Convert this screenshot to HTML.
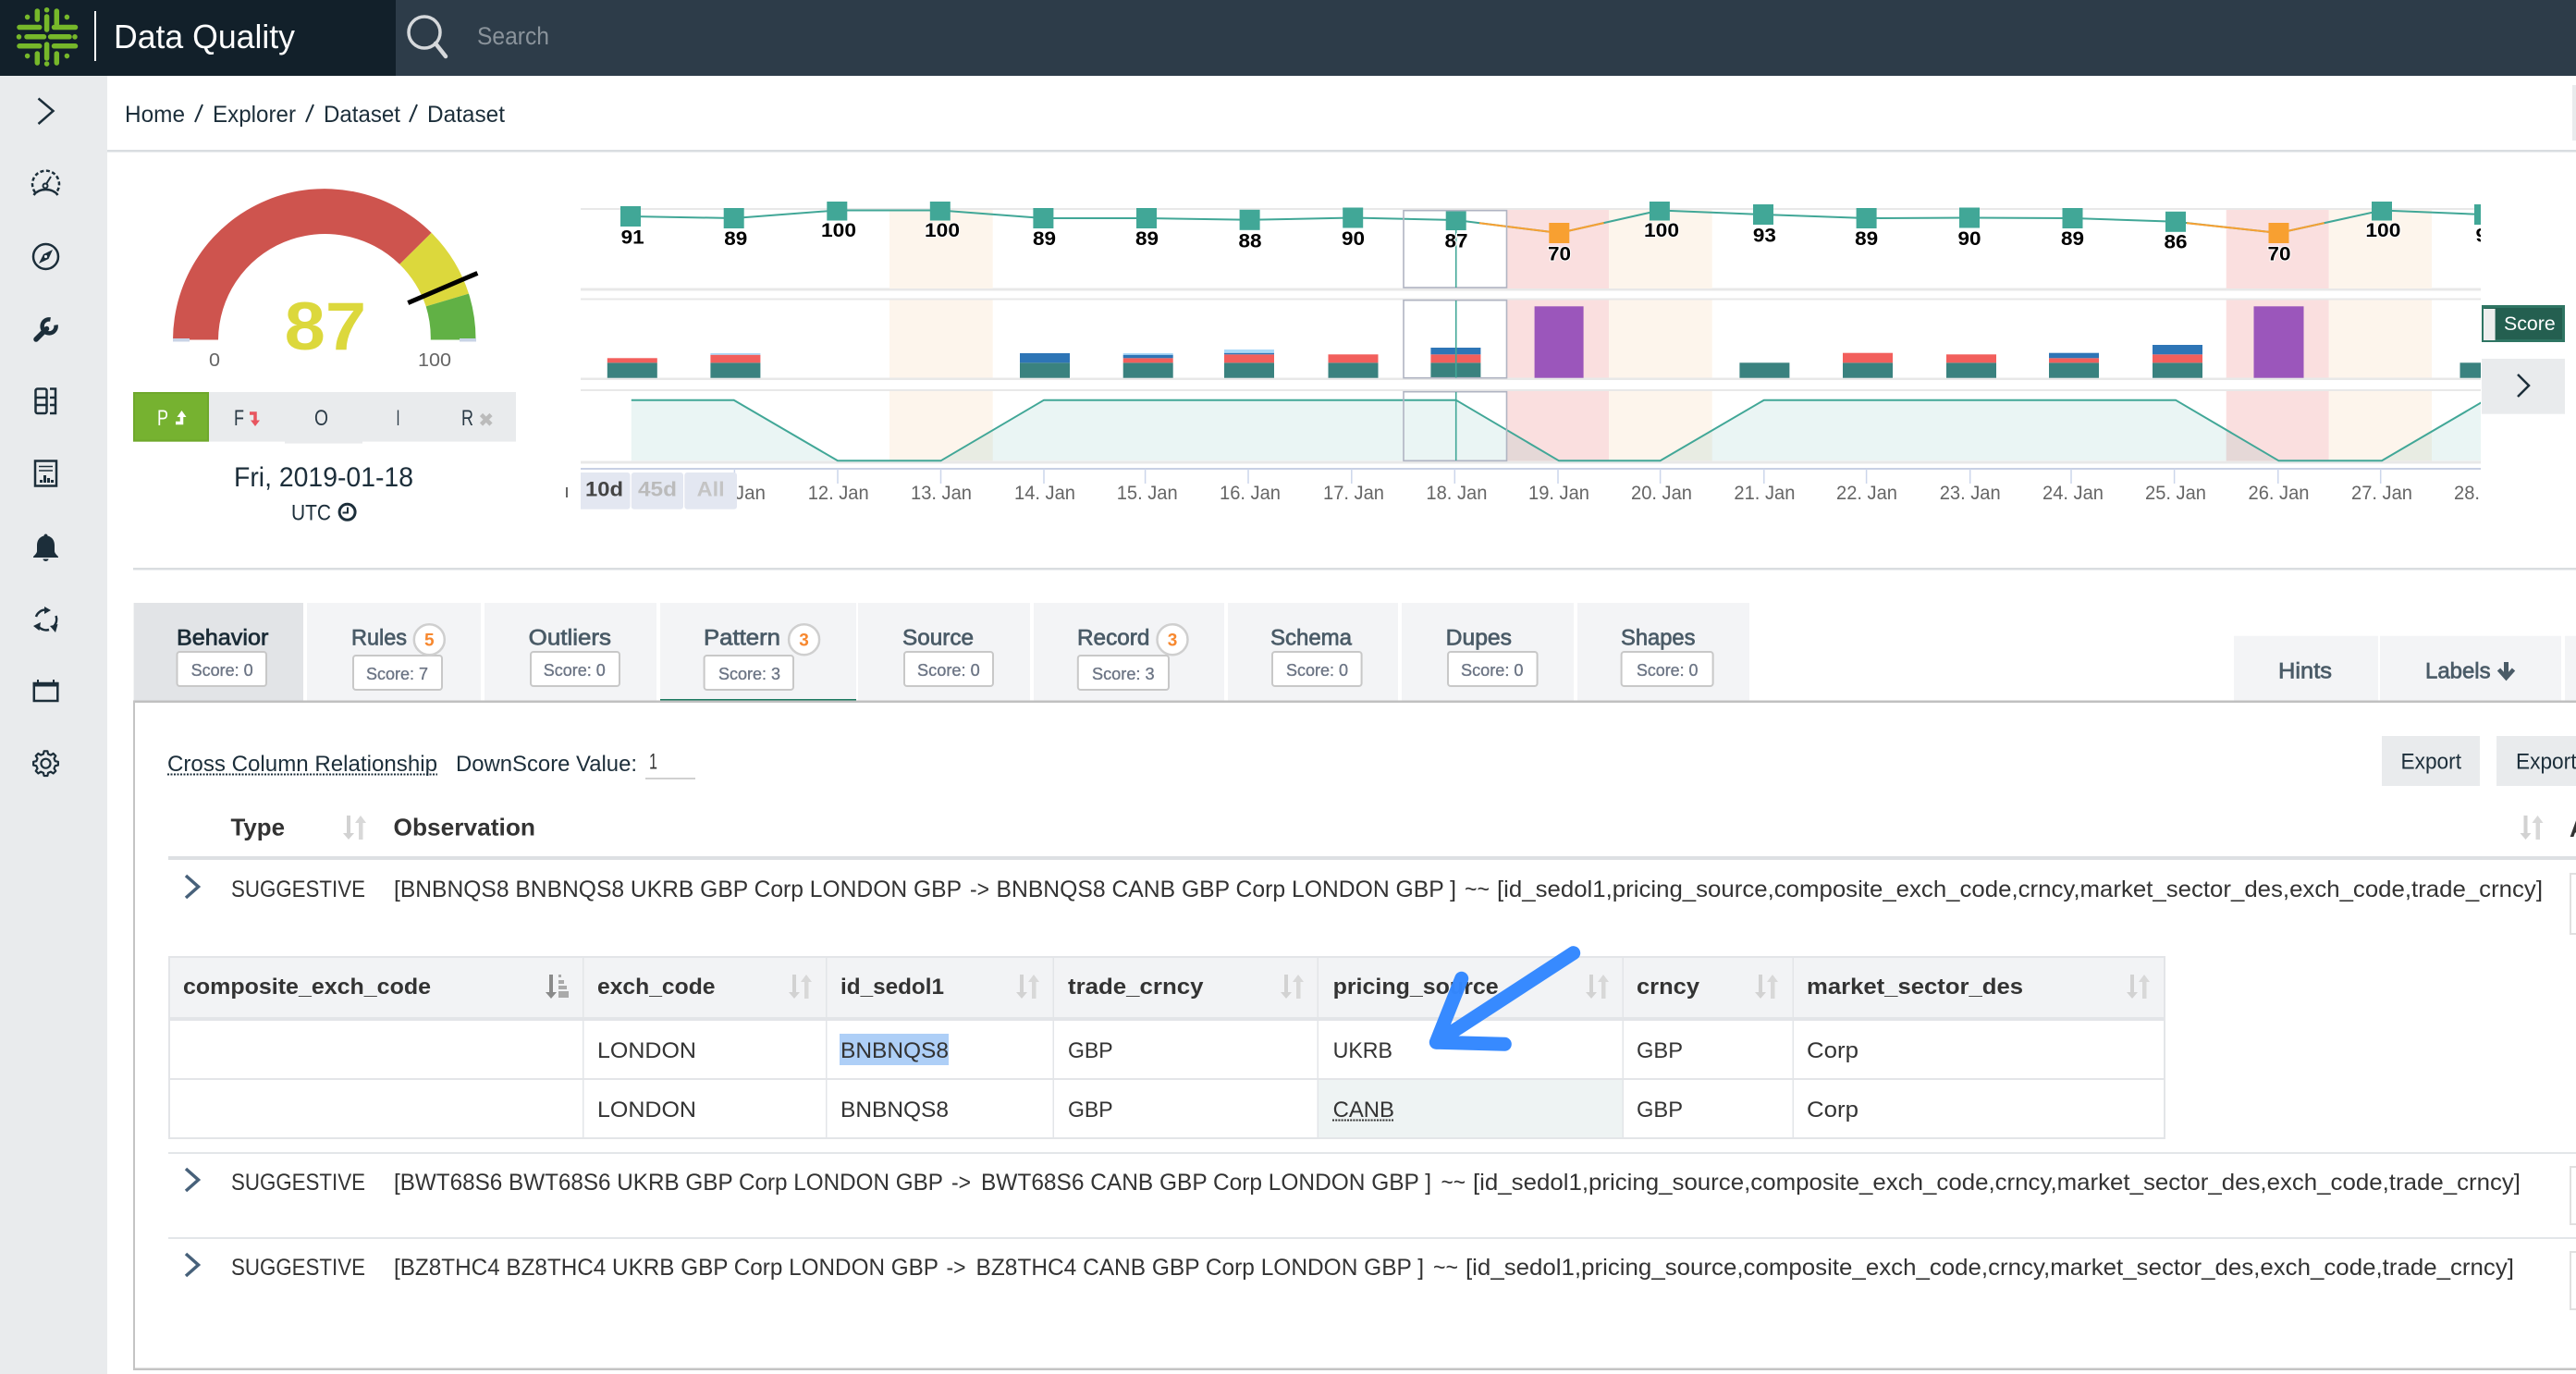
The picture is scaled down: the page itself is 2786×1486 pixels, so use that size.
<!DOCTYPE html>
<html lang="en">
<head>
<meta charset="utf-8">
<title>Data Quality</title>
<style>
html,body{margin:0;padding:0;background:#fff;width:2786px;height:1486px;overflow:hidden}
svg{display:block}
text{font-family:"Liberation Sans",sans-serif;white-space:pre}
.ml{font-size:21px;font-weight:700;fill:#000;stroke:#fff;stroke-width:2px;paint-order:stroke;text-anchor:middle}
.xl{font-size:21px;fill:#666;text-anchor:middle}
.tab{font-size:24px;fill:#4a5b67;stroke:#4a5b67;stroke-width:.7px}
.sc{font-size:18.5px;fill:#6c7585;stroke:#6c7585;stroke-width:.35px}
.bx{fill:#fff;stroke:#c8c8c8;stroke-width:2}
.bd{fill:#fff;stroke:#cfcfcf;stroke-width:2.5}
.bn{font-size:19px;font-weight:700;fill:#f7882f;text-anchor:middle}
.th{font-size:24px;font-weight:700;fill:#333}
.td{font-size:24px;fill:#333}
.rw{font-size:25px;fill:#333}
.ic{fill:none;stroke:#1c2e3a;stroke-width:2.5}
.lg{fill:none;stroke:#76b82a;stroke-width:5.5;stroke-linecap:round}
</style>
</head>
<body>
<svg width="2786" height="1486" viewBox="0 0 2786 1486" xmlns="http://www.w3.org/2000/svg">
<defs>
<symbol id="s" viewBox="0 0 25 26"><rect x="4" y="0" width="4" height="20" fill="#d2d2d2"/><polygon points="0,19 12,19 6,26" fill="#d2d2d2"/><rect x="17" y="7" width="4.5" height="19" fill="#d8d8d8"/><polygon points="13,8 25,8 19,0" fill="#d8d8d8"/></symbol>
<clipPath id="cp"><rect x="628" y="218" width="2055" height="340"/></clipPath>
</defs>

<!-- header -->
<rect x="0" y="0" width="2786" height="82" fill="#2d3c49"/>
<rect x="0" y="0" width="428" height="82" fill="#12202a"/>
<g class="lg">
<path d="M40.3,12V21M50.6,10.7V10.8M50.6,18V32M61.3,12V26M29.6,18.4V18.5M72.4,18.4V18.5"/>
<path d="M21,29.5H42.7M58.5,29.5H81.5M20.5,39.8V39.9M29,39.8H47.5M54.6,39.8H75M81,39.8V39.9M21,49.8H42.7M58.5,49.8H81.5"/>
<path d="M40.3,58V68M50.6,48V63M50.6,69V69.1M61.3,58V68M29.6,60.5V60.6M72.4,60.5V60.6"/>
</g>
<rect x="102" y="12" width="2" height="54" fill="#fff"/>
<text x="123" y="52" font-size="36" fill="#fff" textLength="196" lengthAdjust="spacingAndGlyphs">Data Quality</text>
<circle cx="459" cy="35" r="17" fill="none" stroke="#d5d8db" stroke-width="3.5"/>
<path d="M471,47L482,61" stroke="#d5d8db" stroke-width="4.5" stroke-linecap="round"/>
<text x="516" y="48" font-size="27" fill="#8a939b" textLength="78" lengthAdjust="spacingAndGlyphs">Search</text>

<!-- sidebar -->
<rect x="0" y="82" width="116" height="1404" fill="#e9ebed"/>
<path class="ic" d="M41.5,106.5L57.5,120L41.5,134"/>
<g class="ic">
<path d="M38,208A14.5,14.5 0 1 1 61,208" stroke-dasharray="4 2.5"/>
<path d="M36.5,211C42,203 57,203 62.5,211"/>
<path d="M50,199L55,191" stroke-width="2"/>
<circle cx="49" cy="201" r="2.5" stroke-width="2"/>
</g>
<circle class="ic" cx="49.5" cy="277.5" r="13.5"/>
<polygon points="57,270 52.5,280 42,285 47,275" fill="#1c2e3a"/>
<circle cx="49.5" cy="277.5" r="1.6" fill="#e9ebed"/>
<path d="M39,367L50.5,355.5" stroke="#1c2e3a" stroke-width="5.5" stroke-linecap="round"/>
<path d="M60.5,351.5A7.5,7.5 0 1 1 54.5,345.5" fill="none" stroke="#1c2e3a" stroke-width="4.5"/>
<g class="ic">
<rect x="38.5" y="420.5" width="12" height="26.5" rx="2"/>
<path d="M38.5,430H50.5M38.5,438H50.5M54,420.5H60V447H54M54,430H60M54,438H60"/>
</g>
<rect class="ic" x="38" y="498.5" width="23" height="27"/>
<path d="M42,504.5H57M42,509H57" stroke="#1c2e3a" stroke-width="1.5"/>
<path d="M43,519h3v3h-3zM47,514h3v8h-3zM51,517h3v5h-3zM55,519h3v3h-3z" fill="#1c2e3a"/>
<path d="M49.5,577.5c-1.2,0-2,1-2,2C42,581 40,585 40,590V596C40,598 38,600 36,602V603H63V602C61,600 59,598 59,596V590C59,585 57,581 51.5,579.5c0-1-.8-2-2-2ZM46.5,604.5a3,2.5 0 0 0 6,0Z" fill="#1c2e3a"/>
<g class="ic">
<path d="M39,667A11,11 0 0 1 49,659.5"/>
<path d="M60.5,666A11,11 0 0 1 58.5,677"/>
<path d="M53,681A11,11 0 0 1 41.5,677.5"/>
</g>
<path d="M48,656L55,660L48,664ZM54,677L60,684L62.5,675ZM36,677L44,673L42.5,682Z" fill="#1c2e3a"/>
<rect class="ic" x="36.8" y="739" width="25.5" height="19"/>
<rect x="35.6" y="738" width="28" height="4.5" fill="#1c2e3a"/>
<path d="M41,735V739M58,735V739" stroke="#1c2e3a" stroke-width="2"/>
<g transform="translate(49.5,825.7)" fill="none" stroke="#1c2e3a" stroke-width="2.2" stroke-linejoin="round">
<circle r="5"/>
<polygon points="-2.54,-10.19 -1.88,-13.37 1.88,-13.37 2.54,-10.19 5.41,-9 8.12,-10.78 10.78,-8.12 9,-5.41 10.19,-2.54 13.37,-1.88 13.37,1.88 10.19,2.54 9,5.41 10.78,8.12 8.12,10.78 5.41,9 2.54,10.19 1.88,13.37 -1.88,13.37 -2.54,10.19 -5.41,9 -8.12,10.78 -10.78,8.12 -9,5.41 -10.19,2.54 -13.37,1.88 -13.37,-1.88 -10.19,-2.54 -9,-5.41 -10.78,-8.12 -8.12,-10.78 -5.41,-9"/>
</g>

<!-- breadcrumb -->
<text x="135" y="132" font-size="25" fill="#1c2e3a" textLength="65" lengthAdjust="spacingAndGlyphs">Home</text>
<path d="M219,113L211,132M339,113L331,132M451,113L443,132" stroke="#1c2e3a" stroke-width="2"/>
<text x="230" y="132" font-size="25" fill="#1c2e3a" textLength="90" lengthAdjust="spacingAndGlyphs">Explorer</text>
<text x="350" y="132" font-size="25" fill="#1c2e3a" textLength="83" lengthAdjust="spacingAndGlyphs">Dataset</text>
<text x="462" y="132" font-size="25" fill="#1c2e3a" textLength="84" lengthAdjust="spacingAndGlyphs">Dataset</text>
<rect x="116" y="162" width="2670" height="2.5" fill="#d9dde0"/>
<rect x="2782" y="92" width="4" height="60" fill="#e9ebed"/>

<!-- gauge -->
<path d="M187,367.5A164,164 0 0 1 466.6,251.8L432.2,285.9A115.5,115.5 0 0 0 236,367.5Z" fill="#ce544e"/>
<path d="M466.6,251.8A164,164 0 0 1 507,317.6L460.7,331.4A115.5,115.5 0 0 0 432.2,285.9Z" fill="#dcd83c"/>
<path d="M507,317.6A164,164 0 0 1 514.5,367.5L465.8,367.5A115.5,115.5 0 0 0 460.7,331.4Z" fill="#61b145"/>
<rect x="187" y="366" width="18" height="3.5" fill="#c8d3e6"/>
<rect x="497" y="366" width="18" height="3.5" fill="#c8d3e6"/>
<path d="M441.3,327.6L516.4,295.4" stroke="#000" stroke-width="5"/>
<text x="307.6" y="378" font-size="73" font-weight="700" fill="#dcd83c" textLength="88.5" lengthAdjust="spacingAndGlyphs">87</text>
<text x="226" y="396" font-size="20" fill="#666" textLength="12" lengthAdjust="spacingAndGlyphs">0</text>
<text x="452" y="396" font-size="20" fill="#666" textLength="36" lengthAdjust="spacingAndGlyphs">100</text>

<rect x="226" y="424" width="332" height="53.6" fill="#e9ebed"/>
<rect x="308" y="425.6" width="84" height="54" fill="#e9ebed"/>
<rect x="144" y="424" width="82" height="53.6" fill="#76b230"/>
<rect x="145" y="425" width="80" height="51.6" fill="none" stroke="#6fa82c" stroke-width="2"/>
<text x="170" y="460" font-size="24" fill="#fff" textLength="12" lengthAdjust="spacingAndGlyphs">P</text>
<path d="M190,457.5H196.5V449" fill="none" stroke="#fff" stroke-width="3.5"/>
<polygon points="191.5,451 196.5,444 201.5,451" fill="#fff"/>
<text x="253" y="460" font-size="24" fill="#2a3a46" textLength="11" lengthAdjust="spacingAndGlyphs">F</text>
<path d="M270,447H276V456" fill="none" stroke="#e8555f" stroke-width="3.5"/>
<polygon points="271,454.5 276,461 281,454.5" fill="#e8555f"/>
<text x="340" y="460" font-size="24" fill="#2a3a46" textLength="15" lengthAdjust="spacingAndGlyphs">O</text>
<text x="428.5" y="460" font-size="24" fill="#2a3a46" textLength="4" lengthAdjust="spacingAndGlyphs">I</text>
<text x="499" y="460" font-size="24" fill="#2a3a46" textLength="13" lengthAdjust="spacingAndGlyphs">R</text>
<path d="M520.5,448.5L531,459M531,448.5L520.5,459" stroke="#bbb" stroke-width="4.5"/>

<text x="253" y="526" font-size="30" fill="#1c2e3a" textLength="194" lengthAdjust="spacingAndGlyphs">Fri, 2019-01-18</text>
<text x="315" y="562.6" font-size="24" fill="#1c2e3a" textLength="43" lengthAdjust="spacingAndGlyphs">UTC</text>
<circle cx="375.6" cy="553.8" r="8.5" fill="none" stroke="#1c2e3a" stroke-width="3"/>
<path d="M376,548.5V554.5H370.5" fill="none" stroke="#1c2e3a" stroke-width="2"/>
<rect x="612" y="527" width="2" height="11" fill="#666"/>

<!-- chart -->
<g clip-path="url(#cp)">
<g fill="#e8e8e8">
<rect x="628" y="225" width="2055" height="2"/><rect x="628" y="311.5" width="2055" height="3"/>
<rect x="628" y="322.5" width="2055" height="2"/><rect x="628" y="408.5" width="2055" height="2.5"/>
<rect x="628" y="421" width="2055" height="2"/><rect x="628" y="498.5" width="2055" height="3"/>
</g>
<!-- bands -->
<g fill="#fdf5ec">
<rect x="962" y="227" width="111.7" height="85"/><rect x="962" y="324.5" width="111.7" height="84"/><rect x="962" y="423" width="111.7" height="75.5"/>
<rect x="1740" y="227" width="111.7" height="85"/><rect x="1740" y="324.5" width="111.7" height="84"/><rect x="1740" y="423" width="111.7" height="75.5"/>
<rect x="2518.6" y="227" width="111.4" height="85"/><rect x="2518.6" y="324.5" width="111.4" height="84"/><rect x="2518.6" y="423" width="111.4" height="75.5"/>
</g>
<g fill="#fadfdf">
<rect x="1629.5" y="227" width="110.5" height="85"/><rect x="1629.5" y="324.5" width="110.5" height="84"/><rect x="1629.5" y="423" width="110.5" height="75.5"/>
<rect x="2407.7" y="227" width="110.9" height="85"/><rect x="2407.7" y="324.5" width="110.9" height="84"/><rect x="2407.7" y="423" width="110.9" height="75.5"/>
</g>
<!-- bars teal -->
<g fill="#3a827f">
<rect x="656.8" y="392.3" width="54" height="16.4"/><rect x="768.4" y="392.3" width="54" height="16.4"/>
<rect x="1103" y="392.3" width="54" height="16.4"/><rect x="1214.7" y="392.3" width="54" height="16.4"/>
<rect x="1324" y="392.3" width="54" height="16.4"/><rect x="1436.5" y="392.3" width="54" height="16.4"/>
<rect x="1547.4" y="392.3" width="54" height="16.4"/><rect x="1881.4" y="392.3" width="54" height="16.4"/>
<rect x="1993" y="392.3" width="54" height="16.4"/><rect x="2105" y="392.3" width="54" height="16.4"/>
<rect x="2216" y="392.3" width="54" height="16.4"/><rect x="2328" y="392.3" width="54" height="16.4"/>
<rect x="2660.5" y="392.3" width="54" height="16.4"/>
</g>
<g fill="#f25f5c">
<rect x="656.8" y="387.3" width="54" height="5"/><rect x="768.4" y="383.7" width="54" height="8.6"/>
<rect x="1214.7" y="387.3" width="54" height="5"/><rect x="1324" y="383.3" width="54" height="9"/>
<rect x="1436.5" y="383.3" width="54" height="9"/><rect x="1547.4" y="383.3" width="54" height="9"/>
<rect x="1993" y="381.7" width="54" height="10.6"/><rect x="2105" y="383.3" width="54" height="9"/>
<rect x="2216" y="387.3" width="54" height="5"/><rect x="2328" y="383.3" width="54" height="9"/>
</g>
<g fill="#2e75b6">
<rect x="1103" y="382" width="54" height="10.3"/><rect x="1214.7" y="383.7" width="54" height="3.6"/>
<rect x="1324" y="381.7" width="54" height="1.6"/><rect x="1547.4" y="376" width="54" height="7.3"/>
<rect x="2216" y="381.7" width="54" height="5.6"/><rect x="2328" y="373" width="54" height="10.3"/>
</g>
<g fill="#a8d8f8">
<rect x="768.4" y="382" width="54" height="1.7"/><rect x="1214.7" y="382" width="54" height="1.7"/>
<rect x="1324" y="378" width="54" height="3.7"/>
</g>
<rect x="1659.6" y="331.3" width="53" height="77.4" fill="#9b56bb"/>
<rect x="2437.5" y="331.3" width="54" height="77.4" fill="#9b56bb"/>
<!-- area -->
<path d="M682.8,432.7L793.7,432.7L906,498.3L1017.5,498.3L1129,432.7L1574.7,432.7L1686,498.3L1795.6,498.3L1907.8,432.7L2353,432.7L2464.5,498.3L2576,498.3L2688,432.7V498.3H682.8Z" fill="rgba(65,167,151,.11)"/>
<path d="M682.8,432.7L793.7,432.7L906,498.3L1017.5,498.3L1129,432.7L1574.7,432.7L1686,498.3L1795.6,498.3L1907.8,432.7L2353,432.7L2464.5,498.3L2576,498.3L2688,432.7" fill="none" stroke="#41a797" stroke-width="2"/>
<!-- score line -->
<polyline points="682,234 793.7,236 905.3,227.5 1016.8,227.5 1128.4,236 1240,236 1351.6,237.8 1463.2,235.5 1574.7,238 1686.3,252 1794.9,227.5 1907,232 2018.6,236 2130,235.5 2241.5,236 2353,239.8 2464.5,252 2576,227.5 2687,232" fill="none" stroke="#41a797" stroke-width="2"/>
<path d="M1600,241.2L1686.3,252L1734.6,241.1M2365,241.2L2464.5,252L2513.7,241.2" fill="none" stroke="#f8a031" stroke-width="2"/>
<g fill="#41a797">
<rect x="671" y="223" width="22" height="22"/><rect x="782.7" y="225" width="22" height="22"/>
<rect x="894.3" y="216.5" width="22" height="22"/><rect x="1005.8" y="216.5" width="22" height="22"/>
<rect x="1117.4" y="225" width="22" height="22"/><rect x="1229" y="225" width="22" height="22"/>
<rect x="1340.6" y="226.8" width="22" height="22"/><rect x="1452.2" y="224.5" width="22" height="22"/>
<rect x="1563.7" y="227" width="22" height="22"/><rect x="1783.9" y="216.5" width="22" height="22"/>
<rect x="1896" y="221" width="22" height="22"/><rect x="2007.6" y="225" width="22" height="22"/>
<rect x="2119" y="224.5" width="22" height="22"/><rect x="2230.5" y="225" width="22" height="22"/>
<rect x="2342" y="228.8" width="22" height="22"/><rect x="2565" y="216.5" width="22" height="22"/>
<rect x="2676" y="221" width="22" height="22"/>
</g>
<rect x="1675.3" y="241" width="22" height="22" fill="#f8a031"/>
<rect x="2453.5" y="241" width="22" height="22" fill="#f8a031"/>
<!-- selection -->
<g fill="none" stroke="#b0b4c2" stroke-width="1.6">
<rect x="1518" y="227.7" width="111.5" height="83.3"/>
<rect x="1518" y="324.7" width="111.5" height="84"/>
<rect x="1518" y="423.7" width="111.5" height="74.6"/>
</g>
<path d="M1574.7,249V311M1574.7,325V408.5M1574.7,424V498" stroke="#41a797" stroke-width="1.6"/>
<!-- marker labels -->
<text class="ml" x="684.2" y="263.3" textLength="25" lengthAdjust="spacingAndGlyphs">91</text>
<text class="ml" x="795.8" y="265" textLength="25" lengthAdjust="spacingAndGlyphs">89</text>
<text class="ml" x="907" y="256" textLength="38" lengthAdjust="spacingAndGlyphs">100</text>
<text class="ml" x="1019" y="256" textLength="38" lengthAdjust="spacingAndGlyphs">100</text>
<text class="ml" x="1129.5" y="265" textLength="25" lengthAdjust="spacingAndGlyphs">89</text>
<text class="ml" x="1240.5" y="265" textLength="25" lengthAdjust="spacingAndGlyphs">89</text>
<text class="ml" x="1352" y="267.3" textLength="25" lengthAdjust="spacingAndGlyphs">88</text>
<text class="ml" x="1463.5" y="265" textLength="25" lengthAdjust="spacingAndGlyphs">90</text>
<text class="ml" x="1575" y="267.3" textLength="25" lengthAdjust="spacingAndGlyphs">87</text>
<text class="ml" x="1686.5" y="281.3" textLength="25" lengthAdjust="spacingAndGlyphs">70</text>
<text class="ml" x="1797" y="256" textLength="38" lengthAdjust="spacingAndGlyphs">100</text>
<text class="ml" x="1908.4" y="261.3" textLength="25" lengthAdjust="spacingAndGlyphs">93</text>
<text class="ml" x="2018.6" y="265" textLength="25" lengthAdjust="spacingAndGlyphs">89</text>
<text class="ml" x="2130" y="265" textLength="25" lengthAdjust="spacingAndGlyphs">90</text>
<text class="ml" x="2241.5" y="265" textLength="25" lengthAdjust="spacingAndGlyphs">89</text>
<text class="ml" x="2353" y="268.3" textLength="25" lengthAdjust="spacingAndGlyphs">86</text>
<text class="ml" x="2465" y="281.3" textLength="25" lengthAdjust="spacingAndGlyphs">70</text>
<text class="ml" x="2577.4" y="256" textLength="38" lengthAdjust="spacingAndGlyphs">100</text>
<text class="ml" x="2690" y="261.3" textLength="25" lengthAdjust="spacingAndGlyphs">92</text>
<!-- x axis -->
<rect x="628" y="506" width="2055" height="2" fill="#c8d0e4"/>
<path d="M794.4,507V523M906,507V523M1017.5,507V523M1129,507V523M1238.6,507V523M1350,507V523M1461.8,507V523M1573.3,507V523M1685,507V523M1795.6,507V523M1907.8,507V523M2018.6,507V523M2130.7,507V523M2240,507V523M2351.6,507V523M2463.8,507V523M2574.7,507V523" stroke="#ccd6eb" stroke-width="1.5"/>
<text class="xl" x="795" y="540" textLength="66" lengthAdjust="spacingAndGlyphs">11. Jan</text>
<text class="xl" x="906.7" y="540" textLength="66" lengthAdjust="spacingAndGlyphs">12. Jan</text>
<text class="xl" x="1018" y="540" textLength="66" lengthAdjust="spacingAndGlyphs">13. Jan</text>
<text class="xl" x="1130" y="540" textLength="66" lengthAdjust="spacingAndGlyphs">14. Jan</text>
<text class="xl" x="1240.7" y="540" textLength="66" lengthAdjust="spacingAndGlyphs">15. Jan</text>
<text class="xl" x="1352" y="540" textLength="66" lengthAdjust="spacingAndGlyphs">16. Jan</text>
<text class="xl" x="1464" y="540" textLength="66" lengthAdjust="spacingAndGlyphs">17. Jan</text>
<text class="xl" x="1575.4" y="540" textLength="66" lengthAdjust="spacingAndGlyphs">18. Jan</text>
<text class="xl" x="1686" y="540" textLength="66" lengthAdjust="spacingAndGlyphs">19. Jan</text>
<text class="xl" x="1797" y="540" textLength="66" lengthAdjust="spacingAndGlyphs">20. Jan</text>
<text class="xl" x="1908.4" y="540" textLength="66" lengthAdjust="spacingAndGlyphs">21. Jan</text>
<text class="xl" x="2019" y="540" textLength="66" lengthAdjust="spacingAndGlyphs">22. Jan</text>
<text class="xl" x="2130.7" y="540" textLength="66" lengthAdjust="spacingAndGlyphs">23. Jan</text>
<text class="xl" x="2242" y="540" textLength="66" lengthAdjust="spacingAndGlyphs">24. Jan</text>
<text class="xl" x="2353" y="540" textLength="66" lengthAdjust="spacingAndGlyphs">25. Jan</text>
<text class="xl" x="2464.5" y="540" textLength="66" lengthAdjust="spacingAndGlyphs">26. Jan</text>
<text class="xl" x="2576" y="540" textLength="66" lengthAdjust="spacingAndGlyphs">27. Jan</text>
<text class="xl" x="2687" y="540" textLength="66" lengthAdjust="spacingAndGlyphs">28. Jan</text>
<!-- range buttons -->
<rect x="625" y="511" width="56.5" height="39.7" rx="3" fill="#e3e7f1"/>
<rect x="682.8" y="511" width="56.2" height="39.7" rx="3" fill="#e3e7f1"/>
<rect x="740.3" y="511" width="56.7" height="39.7" rx="3" fill="#e3e7f1"/>
<text x="633" y="536.7" font-size="22" font-weight="700" fill="#444" textLength="41" lengthAdjust="spacingAndGlyphs">10d</text>
<text x="690" y="536.7" font-size="22" font-weight="700" fill="#bbb" textLength="42" lengthAdjust="spacingAndGlyphs">45d</text>
<text x="753.7" y="536.7" font-size="22" font-weight="700" fill="#c4c4c4" textLength="30" lengthAdjust="spacingAndGlyphs">All</text>
</g>
<!-- legend -->
<rect x="2684" y="330" width="90" height="40" fill="#2f7563"/>
<rect x="2687" y="333" width="84" height="34" fill="#245f50"/>
<rect x="2686" y="334" width="12.6" height="34" fill="#eee"/>
<text x="2708" y="357" font-size="21" fill="#fff" textLength="55.7" lengthAdjust="spacingAndGlyphs">Score</text>
<rect x="2684" y="388" width="90" height="59.7" fill="#e9ebed"/>
<path d="M2723,405L2735,417L2723,429" fill="none" stroke="#1c2e3a" stroke-width="2.5"/>

<rect x="144" y="614" width="2642" height="2.5" fill="#d9dde0"/>

<!-- tabs -->
<rect x="144.6" y="652" width="183.4" height="106" fill="#e2e4e7"/>
<g fill="#f3f4f6">
<rect x="332" y="652" width="188" height="106"/><rect x="524" y="652" width="186" height="106"/>
<rect x="714" y="652" width="212" height="106"/><rect x="928" y="652" width="186" height="106"/>
<rect x="1118" y="652" width="206" height="106"/><rect x="1328" y="652" width="184" height="106"/>
<rect x="1516" y="652" width="186" height="106"/><rect x="1706" y="652" width="186" height="106"/>
<rect x="2416" y="687.7" width="156" height="70.3"/><rect x="2574" y="687.7" width="196" height="70.3"/>
<rect x="2774" y="687.7" width="12" height="70.3"/>
</g>
<rect x="714" y="756" width="212" height="2.5" fill="#1c7a60"/>

<text class="tab" style="fill:#1a2b36;stroke:#1a2b36" x="191" y="697.3" textLength="99.4" lengthAdjust="spacingAndGlyphs">Behavior</text>
<rect class="bx" x="191.5" y="705" width="96.5" height="37" rx="3"/>
<text class="sc" x="206.6" y="731" textLength="67" lengthAdjust="spacingAndGlyphs">Score: 0</text>

<text class="tab" x="380" y="697.3" textLength="60" lengthAdjust="spacingAndGlyphs">Rules</text>
<rect class="bx" x="382" y="709" width="96" height="37" rx="3"/>
<circle class="bd" cx="464.3" cy="691.7" r="16.5"/>
<text class="bn" x="464.3" y="698.5">5</text>
<text class="sc" x="396" y="735" textLength="67" lengthAdjust="spacingAndGlyphs">Score: 7</text>

<text class="tab" x="571.7" y="697.3" textLength="89.3" lengthAdjust="spacingAndGlyphs">Outliers</text>
<rect class="bx" x="574" y="705" width="96" height="37" rx="3"/>
<text class="sc" x="587.8" y="731" textLength="67" lengthAdjust="spacingAndGlyphs">Score: 0</text>

<text class="tab" x="761" y="697.3" textLength="83" lengthAdjust="spacingAndGlyphs">Pattern</text>
<rect class="bx" x="761.6" y="709" width="96.4" height="37" rx="3"/>
<circle class="bd" cx="869.6" cy="691.7" r="16.5"/>
<text class="bn" x="869.6" y="698.5">3</text>
<text class="sc" x="777" y="735" textLength="67" lengthAdjust="spacingAndGlyphs">Score: 3</text>

<text class="tab" x="976" y="697.3" textLength="77" lengthAdjust="spacingAndGlyphs">Source</text>
<rect class="bx" x="978" y="705" width="96" height="37" rx="3"/>
<text class="sc" x="992" y="731" textLength="67.7" lengthAdjust="spacingAndGlyphs">Score: 0</text>

<text class="tab" x="1165" y="697.3" textLength="78.4" lengthAdjust="spacingAndGlyphs">Record</text>
<rect class="bx" x="1165.8" y="709" width="98.2" height="37" rx="3"/>
<circle class="bd" cx="1268" cy="691.7" r="16.5"/>
<text class="bn" x="1268" y="698.5">3</text>
<text class="sc" x="1181" y="735" textLength="67.6" lengthAdjust="spacingAndGlyphs">Score: 3</text>

<text class="tab" x="1374" y="697.3" textLength="88" lengthAdjust="spacingAndGlyphs">Schema</text>
<rect class="bx" x="1376" y="705" width="96.6" height="37" rx="3"/>
<text class="sc" x="1391" y="731" textLength="67" lengthAdjust="spacingAndGlyphs">Score: 0</text>

<text class="tab" x="1563.7" y="697.3" textLength="71.3" lengthAdjust="spacingAndGlyphs">Dupes</text>
<rect class="bx" x="1566" y="705" width="96.6" height="37" rx="3"/>
<text class="sc" x="1580" y="731" textLength="67.5" lengthAdjust="spacingAndGlyphs">Score: 0</text>

<text class="tab" x="1753" y="697.3" textLength="80.5" lengthAdjust="spacingAndGlyphs">Shapes</text>
<rect class="bx" x="1753.6" y="705" width="99" height="37" rx="3"/>
<text class="sc" x="1770" y="731" textLength="66.4" lengthAdjust="spacingAndGlyphs">Score: 0</text>

<text class="tab" x="2464" y="733.3" textLength="58" lengthAdjust="spacingAndGlyphs">Hints</text>
<text class="tab" x="2623" y="733.3" textLength="70.6" lengthAdjust="spacingAndGlyphs">Labels</text>
<path d="M2710.5,716V731" stroke="#4a5b67" stroke-width="5"/>
<path d="M2702.5,724L2710.5,733L2718.5,724" fill="none" stroke="#4a5b67" stroke-width="4.5"/>

<!-- panel borders -->
<rect x="144" y="757.5" width="2642" height="2.5" fill="#c0c0c0"/>
<rect x="144" y="758" width="2" height="723" fill="#c4c4c4"/>
<rect x="144" y="1479.5" width="2642" height="2.5" fill="#c4c4c4"/>

<!-- toolbar -->
<text x="181" y="834" font-size="24" fill="#1c2e3a" textLength="292" lengthAdjust="spacingAndGlyphs">Cross Column Relationship</text>
<path d="M181,837.5H473" stroke="#1c2e3a" stroke-width="2" stroke-dasharray="2 1.5"/>
<text x="493" y="834" font-size="24" fill="#1c2e3a" textLength="196" lengthAdjust="spacingAndGlyphs">DownScore Value:</text>
<text x="702" y="831.7" font-size="24" fill="#333" textLength="9" lengthAdjust="spacingAndGlyphs">1</text>
<rect x="698" y="841" width="54" height="2" fill="#d0d0d0"/>
<rect x="2576" y="796" width="106" height="54" fill="#e9ebed"/>
<rect x="2700" y="796" width="86" height="54" fill="#e9ebed"/>
<text x="2596.5" y="831.7" font-size="24" fill="#1c2e3a" textLength="65.5" lengthAdjust="spacingAndGlyphs">Export</text>
<text x="2721" y="831.7" font-size="24" fill="#1c2e3a" textLength="65.5" lengthAdjust="spacingAndGlyphs">Export</text>

<!-- table head -->
<text x="249.5" y="903.3" font-size="26" font-weight="700" fill="#333" textLength="58.5" lengthAdjust="spacingAndGlyphs">Type</text>
<use href="#s" x="371" y="882" width="25" height="26"/>
<text x="425.5" y="903.3" font-size="26" font-weight="700" fill="#333" textLength="153.5" lengthAdjust="spacingAndGlyphs">Observation</text>
<use href="#s" x="2725.5" y="882" width="25" height="26"/>
<text x="2779" y="905" font-size="26" font-weight="700" fill="#333">A</text>
<rect x="182" y="926" width="2604" height="4" fill="#dde0e3"/>

<!-- row 1 -->
<path d="M201,947L214.5,959L201,971" fill="none" stroke="#47617a" stroke-width="3.5"/>
<text class="rw" x="250" y="970" textLength="145" lengthAdjust="spacingAndGlyphs">SUGGESTIVE</text>
<text class="rw" x="426" y="970" textLength="614" lengthAdjust="spacingAndGlyphs">[BNBNQS8 BNBNQS8 UKRB GBP Corp LONDON GBP</text>
<text class="rw" x="1049" y="970" textLength="21" lengthAdjust="spacingAndGlyphs">-&gt;</text>
<text class="rw" x="1077.5" y="970" textLength="497.5" lengthAdjust="spacingAndGlyphs">BNBNQS8 CANB GBP Corp LONDON GBP ]</text>
<text class="rw" x="1584" y="970" textLength="27" lengthAdjust="spacingAndGlyphs">~~</text>
<text class="rw" x="1619" y="970" textLength="1131" lengthAdjust="spacingAndGlyphs">[id_sedol1,pricing_source,composite_exch_code,crncy,market_sector_des,exch_code,trade_crncy]</text>
<rect x="2780" y="945" width="10" height="65" fill="#fff" stroke="#e0e0e0" stroke-width="2"/>

<!-- inner table -->
<rect x="183" y="1035" width="2157" height="66" fill="#f2f3f5"/>
<rect x="1425" y="1168" width="330" height="62" fill="#eef3f3"/>
<rect x="908" y="1118" width="118" height="34" fill="#aecff7"/>
<g fill="#e3e5e8">
<rect x="182" y="1034" width="2159" height="2"/>
<rect x="182" y="1100" width="2159" height="4"/>
<rect x="182" y="1166" width="2159" height="2"/>
<rect x="182" y="1230" width="2159" height="2"/>
<rect x="182" y="1034" width="2" height="198"/>
<rect x="630" y="1034" width="1.5" height="198"/>
<rect x="893" y="1034" width="1.5" height="198"/>
<rect x="1138.5" y="1034" width="1.5" height="198"/>
<rect x="1424.5" y="1034" width="1.5" height="198"/>
<rect x="1754.5" y="1034" width="1.5" height="198"/>
<rect x="1938.5" y="1034" width="1.5" height="198"/>
<rect x="2340" y="1034" width="2" height="198"/>
</g>
<text class="th" x="198" y="1075" textLength="268" lengthAdjust="spacingAndGlyphs">composite_exch_code</text>
<text class="th" x="646" y="1075" textLength="127.5" lengthAdjust="spacingAndGlyphs">exch_code</text>
<text class="th" x="909" y="1075" textLength="112" lengthAdjust="spacingAndGlyphs">id_sedol1</text>
<text class="th" x="1155" y="1075" textLength="146.5" lengthAdjust="spacingAndGlyphs">trade_crncy</text>
<text class="th" x="1441.6" y="1075" textLength="179" lengthAdjust="spacingAndGlyphs">pricing_source</text>
<text class="th" x="1770" y="1075" textLength="68" lengthAdjust="spacingAndGlyphs">crncy</text>
<text class="th" x="1954" y="1075" textLength="234" lengthAdjust="spacingAndGlyphs">market_sector_des</text>
<rect x="594" y="1054" width="4" height="20" fill="#8a8a8a"/><polygon points="590,1073 602,1073 596,1080" fill="#8a8a8a"/>
<path d="M604,1054h3v3h-3zM604,1060h6v4h-6zM604,1066h9v4h-9zM604,1072h11v7h-11z" fill="#aaa"/>
<use href="#s" x="853" y="1054" width="25" height="26"/>
<use href="#s" x="1099" y="1054" width="25" height="26"/>
<use href="#s" x="1385" y="1054" width="25" height="26"/>
<use href="#s" x="1715" y="1054" width="25" height="26"/>
<use href="#s" x="1898" y="1054" width="25" height="26"/>
<use href="#s" x="2300" y="1054" width="25" height="26"/>

<text class="td" x="646" y="1144" textLength="107" lengthAdjust="spacingAndGlyphs">LONDON</text>
<text class="td" x="909" y="1144" textLength="117" lengthAdjust="spacingAndGlyphs">BNBNQS8</text>
<text class="td" x="1155" y="1144" textLength="48.6" lengthAdjust="spacingAndGlyphs">GBP</text>
<text class="td" x="1441.6" y="1144" textLength="64.4" lengthAdjust="spacingAndGlyphs">UKRB</text>
<text class="td" x="1770" y="1144" textLength="50" lengthAdjust="spacingAndGlyphs">GBP</text>
<text class="td" x="1954" y="1144" textLength="56" lengthAdjust="spacingAndGlyphs">Corp</text>
<text class="td" x="646" y="1208" textLength="107" lengthAdjust="spacingAndGlyphs">LONDON</text>
<text class="td" x="909" y="1208" textLength="117" lengthAdjust="spacingAndGlyphs">BNBNQS8</text>
<text class="td" x="1155" y="1208" textLength="48.6" lengthAdjust="spacingAndGlyphs">GBP</text>
<text class="td" x="1441.6" y="1208" textLength="66.4" lengthAdjust="spacingAndGlyphs">CANB</text>
<path d="M1441,1211.5H1508" stroke="#333" stroke-width="2" stroke-dasharray="2 1.2"/>
<text class="td" x="1770" y="1208" textLength="50" lengthAdjust="spacingAndGlyphs">GBP</text>
<text class="td" x="1954" y="1208" textLength="56" lengthAdjust="spacingAndGlyphs">Corp</text>

<!-- row 2 -->
<rect x="182" y="1246" width="2604" height="2" fill="#e3e6e9"/>
<path d="M201,1264L214.5,1276L201,1288" fill="none" stroke="#47617a" stroke-width="3.5"/>
<text class="rw" x="250" y="1287" textLength="145" lengthAdjust="spacingAndGlyphs">SUGGESTIVE</text>
<text class="rw" x="426" y="1287" textLength="594" lengthAdjust="spacingAndGlyphs">[BWT68S6 BWT68S6 UKRB GBP Corp LONDON GBP</text>
<text class="rw" x="1029" y="1287" textLength="21" lengthAdjust="spacingAndGlyphs">-&gt;</text>
<text class="rw" x="1061" y="1287" textLength="487" lengthAdjust="spacingAndGlyphs">BWT68S6 CANB GBP Corp LONDON GBP ]</text>
<text class="rw" x="1558.5" y="1287" textLength="26.5" lengthAdjust="spacingAndGlyphs">~~</text>
<text class="rw" x="1593" y="1287" textLength="1133" lengthAdjust="spacingAndGlyphs">[id_sedol1,pricing_source,composite_exch_code,crncy,market_sector_des,exch_code,trade_crncy]</text>
<rect x="2780" y="1262" width="10" height="62" fill="#fff" stroke="#e0e0e0" stroke-width="2"/>

<!-- row 3 -->
<rect x="182" y="1338" width="2604" height="2" fill="#e3e6e9"/>
<path d="M201,1356L214.5,1368L201,1380" fill="none" stroke="#47617a" stroke-width="3.5"/>
<text class="rw" x="250" y="1379" textLength="145" lengthAdjust="spacingAndGlyphs">SUGGESTIVE</text>
<text class="rw" x="426" y="1379" textLength="589" lengthAdjust="spacingAndGlyphs">[BZ8THC4 BZ8THC4 UKRB GBP Corp LONDON GBP</text>
<text class="rw" x="1023.5" y="1379" textLength="21" lengthAdjust="spacingAndGlyphs">-&gt;</text>
<text class="rw" x="1055.5" y="1379" textLength="484.5" lengthAdjust="spacingAndGlyphs">BZ8THC4 CANB GBP Corp LONDON GBP ]</text>
<text class="rw" x="1550" y="1379" textLength="27" lengthAdjust="spacingAndGlyphs">~~</text>
<text class="rw" x="1585" y="1379" textLength="1134" lengthAdjust="spacingAndGlyphs">[id_sedol1,pricing_source,composite_exch_code,crncy,market_sector_des,exch_code,trade_crncy]</text>
<rect x="2780" y="1354" width="10" height="62" fill="#fff" stroke="#e0e0e0" stroke-width="2"/>

<!-- annotation arrow -->
<path d="M1701.7,1030.7L1553.3,1127.3M1580.7,1058.3L1553.3,1127.3L1627.3,1129.3" fill="none" stroke="#3388ff" stroke-width="15" stroke-linecap="round" stroke-linejoin="round" opacity=".98"/>
</svg>
</body>
</html>
